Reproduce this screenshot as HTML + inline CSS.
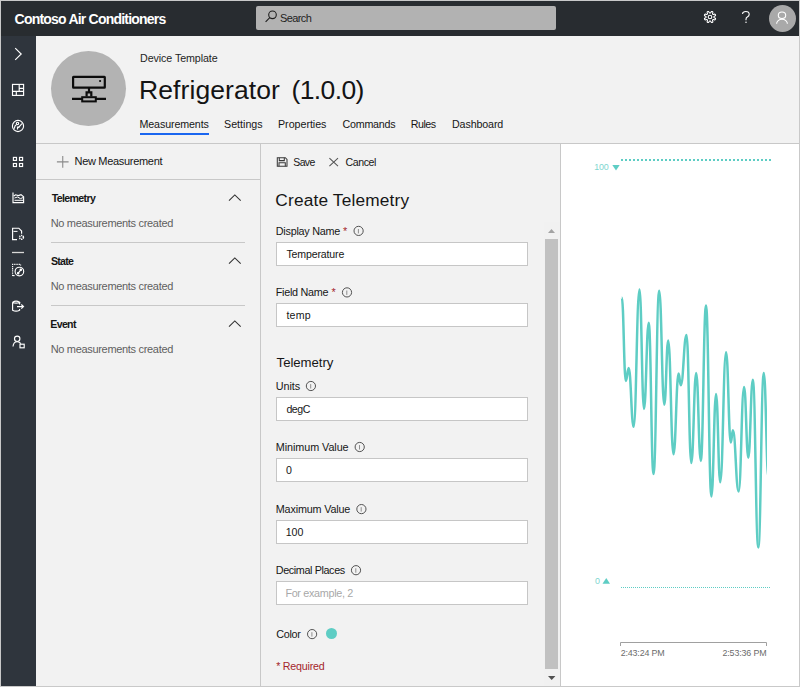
<!DOCTYPE html>
<html><head><meta charset="utf-8">
<style>
*{box-sizing:border-box;margin:0;padding:0}
html,body{width:800px;height:687px;overflow:hidden}
body{position:relative;background:#f2f2f2;font-family:"Liberation Sans",sans-serif;color:#1a1a1a}
.a{position:absolute}
#frame{position:absolute;left:0;top:0;width:800px;height:687px;border:1px solid #c9c9c9}
.hl{position:absolute;height:1px;background:#c8c8c8}
.vl{position:absolute;width:1px;background:#c8c8c8}
.inp{position:absolute;left:276px;width:252px;height:24px;background:#fff;border:1px solid #c6c6c6}
svg.full{position:absolute;left:0;top:0}
</style></head><body>
<div class="a" style="left:1px;top:1px;width:798px;height:35px;background:#282c30"></div>
<div class="a" style="left:1px;top:36px;width:35px;height:650px;background:#2f353d"></div>
<div class="a" style="left:256px;top:6px;width:300px;height:24px;background:#b2b2b2;border-radius:2px"></div>
<div class="a" style="left:769px;top:5px;width:27px;height:27px;border-radius:50%;background:#a9a9a9"></div>

<div class="a" style="left:51px;top:51px;width:75px;height:75px;border-radius:50%;background:#b3b3b3"></div>
<div class="a" style="left:140px;top:133px;width:69px;height:2px;background:#1a66f0"></div>
<div class="hl" style="left:36px;top:143px;width:763px"></div>
<div class="hl" style="left:36px;top:179px;width:224px"></div>
<div class="hl" style="left:51px;top:242px;width:194px"></div>
<div class="hl" style="left:51px;top:305px;width:194px"></div>
<div class="vl" style="left:260px;top:143px;height:543px"></div>

<div class="inp" style="top:242px"></div>
<div class="inp" style="top:303px"></div>
<div class="inp" style="top:397px"></div>
<div class="inp" style="top:458px"></div>
<div class="inp" style="top:520px"></div>
<div class="inp" style="top:581px"></div>
<div class="a" style="left:325.5px;top:628px;width:11px;height:11px;border-radius:50%;background:#5ecdc4"></div>

<div class="a" style="left:544px;top:222px;width:16px;height:464px;background:#f1f1f1"></div>
<div class="a" style="left:545px;top:239px;width:13px;height:430px;background:#c1c1c1"></div>
<div class="vl" style="left:560px;top:143px;height:543px"></div>
<div class="a" style="left:561px;top:144px;width:238px;height:542px;background:#fff"></div>

<svg class="full" width="800" height="687" viewBox="0 0 800 687" font-family="Liberation Sans">
<!-- top bar icons -->
<g fill="none" stroke="#1e1e1e" stroke-width="1.1"><circle cx="272.5" cy="14.8" r="3.8"/><path d="M269.8 17.6 L265.6 21.8"/></g>
<g fill="none" stroke="#fff" stroke-width="1.1" stroke-linejoin="round">
<circle cx="710" cy="17" r="1.8"/>
<path d="M713.95 17.00 L713.95 17.16 L713.97 17.31 L714.03 17.48 L714.27 17.68 L714.81 17.96 L715.32 18.28 L715.52 18.56 L715.53 18.80 L715.48 19.02 L715.40 19.24 L715.31 19.45 L715.19 19.64 L715.01 19.80 L714.67 19.86 L714.07 19.72 L713.50 19.54 L713.19 19.52 L713.03 19.58 L712.90 19.69 L712.79 19.79 L712.69 19.90 L712.58 20.03 L712.52 20.19 L712.54 20.50 L712.72 21.07 L712.86 21.67 L712.80 22.01 L712.64 22.19 L712.45 22.31 L712.24 22.40 L712.02 22.48 L711.80 22.53 L711.56 22.52 L711.28 22.32 L710.96 21.81 L710.68 21.27 L710.48 21.03 L710.31 20.97 L710.16 20.95 L710.00 20.95 L709.84 20.95 L709.69 20.97 L709.52 21.03 L709.32 21.27 L709.04 21.81 L708.72 22.32 L708.44 22.52 L708.20 22.53 L707.98 22.48 L707.76 22.40 L707.55 22.31 L707.36 22.19 L707.20 22.01 L707.14 21.67 L707.28 21.07 L707.46 20.50 L707.48 20.19 L707.42 20.03 L707.31 19.90 L707.21 19.79 L707.10 19.69 L706.97 19.58 L706.81 19.52 L706.50 19.54 L705.93 19.72 L705.33 19.86 L704.99 19.80 L704.81 19.64 L704.69 19.45 L704.60 19.24 L704.52 19.02 L704.47 18.80 L704.48 18.56 L704.68 18.28 L705.19 17.96 L705.73 17.68 L705.97 17.48 L706.03 17.31 L706.05 17.16 L706.05 17.00 L706.05 16.84 L706.03 16.69 L705.97 16.52 L705.73 16.32 L705.19 16.04 L704.68 15.72 L704.48 15.44 L704.47 15.20 L704.52 14.98 L704.60 14.76 L704.69 14.55 L704.81 14.36 L704.99 14.20 L705.33 14.14 L705.93 14.28 L706.50 14.46 L706.81 14.48 L706.97 14.42 L707.10 14.31 L707.21 14.21 L707.31 14.10 L707.42 13.97 L707.48 13.81 L707.46 13.50 L707.28 12.93 L707.14 12.33 L707.20 11.99 L707.36 11.81 L707.55 11.69 L707.76 11.60 L707.98 11.52 L708.20 11.47 L708.44 11.48 L708.72 11.68 L709.04 12.19 L709.32 12.73 L709.52 12.97 L709.69 13.03 L709.84 13.05 L710.00 13.05 L710.16 13.05 L710.31 13.03 L710.48 12.97 L710.68 12.73 L710.96 12.19 L711.28 11.68 L711.56 11.48 L711.80 11.47 L712.02 11.52 L712.24 11.60 L712.45 11.69 L712.64 11.81 L712.80 11.99 L712.86 12.33 L712.72 12.93 L712.54 13.50 L712.52 13.81 L712.58 13.97 L712.69 14.10 L712.79 14.21 L712.90 14.31 L713.03 14.42 L713.19 14.48 L713.50 14.46 L714.07 14.28 L714.67 14.14 L715.01 14.20 L715.19 14.36 L715.31 14.55 L715.40 14.76 L715.48 14.98 L715.53 15.20 L715.52 15.44 L715.32 15.72 L714.81 16.04 L714.27 16.32 L714.03 16.52 L713.97 16.69 L713.95 16.84 Z"/>
<ellipse cx="782" cy="15.3" rx="3.7" ry="3.3"/><path d="M776.6 23.8 A5.4 4.6 0 0 1 787.4 23.8"/>
</g>
<path d="M742.4 13.9 Q742.9 11.5 745.8 11.5 Q749.2 11.5 749.2 14.3 Q749.2 16.1 747.3 17.1 Q746 17.8 746 19.3 V20.3" fill="none" stroke="#fff" stroke-width="1.1"/><circle cx="746" cy="22.2" r="0.75" fill="#fff"/>
<!-- sidebar icons -->
<g fill="none" stroke="#fff" stroke-width="1.15">
<path d="M15.2 48.2 L21.2 54 L15.2 59.8"/>
<rect x="12.5" y="84.4" width="11.1" height="11"/><path d="M12.5 91.4 H23.6 M19.2 84.4 V91.4 M19.2 88.3 H23.6 M16.3 91.4 V95.4"/>
<circle cx="18" cy="126" r="5.6"/><circle cx="17.5" cy="123.4" r="1.2"/><path d="M14.3 128.8 Q14.5 125.5 16.5 124.5"/><path d="M18.2 127.8 L22 123.6"/><path d="M17.5 129.5 V127 H19.5"/>
<rect x="13.4" y="157.4" width="3.1" height="3"/><rect x="19.5" y="157.4" width="3.1" height="3"/><rect x="13.4" y="163.5" width="3.1" height="3"/><rect x="19.5" y="163.5" width="3.1" height="3"/>
<path d="M13 192.4 V202.6 H23.6 V196.8 L21 194.6 L18.4 195.6 L15.5 194.8 L14 196"/><path d="M14.5 198 L17.5 197 L20.5 198.6 L23 197.6 M14.5 200.3 L23 200.3" stroke-width="1"/>
<path d="M17 239.6 H12.6 V228.2 H18.8 L21.6 231 V233.8"/><path d="M13.5 231.4 H17.5" stroke-width="1"/><circle cx="21.5" cy="237.3" r="1.9" stroke-width="1.5" stroke-dasharray="1.2 0.7"/>
<path d="M12 252.5 H24" stroke="#d8d8d8" stroke-width="1.3"/>
<path d="M12.6 276 V264.4 H20.6 V265.6" stroke-dasharray="1.3 0.9"/><path d="M12.6 275.6 H14.6"/><circle cx="19.4" cy="271.5" r="4.3"/><path d="M17.6 273.6 L21.4 269.4"/><circle cx="18.2" cy="273.2" r="0.7" fill="#fff"/><circle cx="20.8" cy="269.8" r="0.7" fill="#fff"/>
<path d="M12.6 302.2 V310.2 Q16 312.2 19.6 310.2 V309 M12.6 302.2 Q16 300.2 19.6 302.2 Q16 304.2 12.6 302.2 M19.6 302.2 V304.5"/><path d="M17 306.6 H23.3 M21.3 304.5 L23.5 306.6 L21.3 308.7"/>
<circle cx="17.2" cy="338.8" r="2.7"/><path d="M13 346.5 Q13.5 341.7 17.2 341.7 Q19.6 341.7 20.8 343.6"/><rect x="20" y="344.2" width="4.2" height="3.6"/>
</g>
<!-- device icon -->
<g fill="none" stroke="#0c0c0c" stroke-width="2.2">
<rect x="73.1" y="76.9" width="31.7" height="10.7" rx="0.4"/>
<path d="M89 87.6 V92.4 M86.6 96.5 V92.4 H91.3 V96.5 M72 98.9 H82.2 M95.8 98.9 H106"/>
<rect x="82.2" y="97.2" width="13.6" height="4.2" stroke-width="2"/>
</g>
<circle cx="100.1" cy="81" r="1.1" fill="#0c0c0c"/>
<!-- left panel icons -->
<path d="M62.75 156 V167.7 M56.9 161.9 H68.6" stroke="#8a8a8a" stroke-width="1.1" fill="none"/>
<g fill="none" stroke="#333" stroke-width="1.1">
<path d="M229 200.6 L234.8 194.9 L240.7 200.6"/>
<path d="M229 263.6 L234.8 257.9 L240.7 263.6"/>
<path d="M229 326.6 L234.8 320.9 L240.7 326.6"/>
</g>
<!-- save / cancel -->
<g fill="none" stroke="#3a3a3a" stroke-width="1.05">
<path d="M277.3 157.7 H285.3 L287 159.4 V166.3 H277.3 Z"/><path d="M279.3 157.7 V160.6 H284.3 V157.7"/><path d="M279 166.3 V162.8 H285.3 V166.3"/>
<path d="M329.4 158.2 L338 166.1 M338 158.2 L329.4 166.1" stroke="#555"/>
</g>
<!-- info icons -->
<g fill="none" stroke="#4a4a4a" stroke-width="0.95">
<circle cx="358.6" cy="230.9" r="4.6"/><path d="M358.4 229 V233.4" stroke="#888"/>
<circle cx="347" cy="292.4" r="4.6"/><path d="M346.8 290.5 V294.9" stroke="#888"/>
<circle cx="310.9" cy="386" r="4.6"/><path d="M310.7 384.1 V388.5" stroke="#888"/>
<circle cx="359.7" cy="447" r="4.6"/><path d="M359.5 445.1 V449.5" stroke="#888"/>
<circle cx="361.4" cy="509.1" r="4.6"/><path d="M361.2 507.2 V511.6" stroke="#888"/>
<circle cx="356" cy="570.2" r="4.6"/><path d="M355.8 568.3 V572.7" stroke="#888"/>
<circle cx="312.1" cy="634.1" r="4.6"/><path d="M311.9 632.2 V636.6" stroke="#888"/>
</g>
<!-- scrollbar arrows -->
<path d="M548 233 H555 L551.5 229 Z" fill="#a3a3a3"/>
<path d="M548 676 H555.4 L551.7 680 Z" fill="#505050"/>
<!-- chart -->
<line x1="621" y1="160" x2="771" y2="160" stroke="#5ecdc4" stroke-width="2" stroke-dasharray="2 2"/>
<line x1="621" y1="587.5" x2="771" y2="587.5" stroke="#5ecdc4" stroke-width="1" stroke-dasharray="1 1"/>
<path d="M612.3 165 H619.7 L616 170.6 Z" fill="#5ecdc4"/>
<path d="M602.5 583.7 H610 L606.25 578 Z" fill="#5ecdc4"/>
<clipPath id="cc"><rect x="600" y="150" width="167" height="450"/></clipPath><path d="M621.8 297.6 C623.6 297.6 624.0 381.0 625.8 381.0 C627.1 381.0 627.4 368.0 628.7 368.0 C630.9 368.0 631.4 426.8 633.6 426.8 C636.3 426.8 636.8 289.5 639.5 289.5 C641.5 289.5 642.0 409.0 644.0 409.0 C646.1 409.0 646.6 322.7 648.7 322.7 C650.9 322.7 651.3 474.0 653.5 474.0 C656.1 474.0 656.6 290.7 659.2 290.7 C661.5 290.7 662.0 404.8 664.3 404.8 C666.1 404.8 666.4 340.4 668.2 340.4 C670.6 340.4 671.1 454.3 673.5 454.3 C675.8 454.3 676.3 373.6 678.6 373.6 C679.6 373.6 679.8 385.2 680.8 385.2 C683.4 385.2 683.9 334.9 686.5 334.9 C688.7 334.9 689.1 463.0 691.3 463.0 C693.5 463.0 694.0 373.1 696.2 373.1 C698.3 373.1 698.7 460.9 700.8 460.9 C703.1 460.9 703.7 305.4 706.0 305.4 C708.4 305.4 709.0 496.5 711.4 496.5 C713.5 496.5 714.0 394.1 716.1 394.1 C717.9 394.1 718.4 482.3 720.2 482.3 C722.9 482.3 723.4 352.3 726.1 352.3 C728.2 352.3 728.7 442.5 730.8 442.5 C731.7 442.5 732.0 430.3 732.9 430.3 C735.5 430.3 736.0 491.5 738.6 491.5 C741.1 491.5 741.6 387.0 744.1 387.0 C746.0 387.0 746.4 457.8 748.3 457.8 C750.3 457.8 750.8 379.8 752.8 379.8 C755.3 379.8 755.8 547.5 758.3 547.5 C760.8 547.5 761.3 373.1 763.8 373.1 C765.9 373.1 766.4 478.0 768.5 478.0" clip-path="url(#cc)" fill="none" stroke="#5ecdc4" stroke-width="2.5" stroke-linejoin="round" stroke-linecap="butt"/>
<path d="M620.5 646 V642.5 H766.5 V646" fill="none" stroke="#a0a0a0" stroke-width="1"/>
<text x='14.60' y='24.30' font-size='14' font-weight="700" letter-spacing='-0.791' fill='#ffffff' xml:space='preserve'>Contoso Air Conditioners</text>
<text x='280.00' y='21.90' font-size='11' letter-spacing='-0.600' fill='#1e1e1e' xml:space='preserve'>Search</text>
<text x='140.00' y='62.20' font-size='10.7' letter-spacing='-0.079' fill='#1e1e1e' xml:space='preserve'>Device Template</text>
<text x='139.00' y='98.75' font-size='26.5' letter-spacing='0.091' fill='#141414' xml:space='preserve'>Refrigerator</text>
<text x='291.50' y='98.75' font-size='26.5' letter-spacing='-0.617' fill='#141414' xml:space='preserve'>(1.0.0)</text>
<text x='139.50' y='128.00' font-size='10.7' letter-spacing='-0.118' fill='#161616' xml:space='preserve'>Measurements</text>
<text x='224.00' y='128.00' font-size='10.7' letter-spacing='0.000' fill='#161616' xml:space='preserve'>Settings</text>
<text x='278.00' y='128.00' font-size='10.7' letter-spacing='-0.028' fill='#161616' xml:space='preserve'>Properties</text>
<text x='342.50' y='128.00' font-size='10.7' letter-spacing='-0.214' fill='#161616' xml:space='preserve'>Commands</text>
<text x='410.75' y='128.00' font-size='10.7' letter-spacing='-0.500' fill='#161616' xml:space='preserve'>Rules</text>
<text x='452.00' y='128.00' font-size='10.7' letter-spacing='-0.125' fill='#161616' xml:space='preserve'>Dashboard</text>
<text x='74.50' y='165.00' font-size='11' letter-spacing='-0.307' fill='#161616' xml:space='preserve'>New Measurement</text>
<text x='51.70' y='202.20' font-size='10.6' font-weight="700" letter-spacing='-0.638' fill='#161616' xml:space='preserve'>Telemetry</text>
<text x='50.70' y='227.00' font-size='11' letter-spacing='-0.318' fill='#5f5f5f' xml:space='preserve'>No measurements created</text>
<text x='50.90' y='264.85' font-size='10.6' font-weight="700" letter-spacing='-0.700' fill='#161616' xml:space='preserve'>State</text>
<text x='50.70' y='289.80' font-size='11' letter-spacing='-0.318' fill='#5f5f5f' xml:space='preserve'>No measurements created</text>
<text x='50.25' y='327.85' font-size='10.6' font-weight="700" letter-spacing='-0.662' fill='#161616' xml:space='preserve'>Event</text>
<text x='50.70' y='352.80' font-size='11' letter-spacing='-0.318' fill='#5f5f5f' xml:space='preserve'>No measurements created</text>
<text x='293.30' y='166.10' font-size='10.5' letter-spacing='-0.667' fill='#161616' xml:space='preserve'>Save</text>
<text x='345.60' y='166.10' font-size='10.6' letter-spacing='-0.440' fill='#161616' xml:space='preserve'>Cancel</text>
<text x='275.30' y='206.00' font-size='17.3' letter-spacing='0.173' fill='#161616' xml:space='preserve'>Create Telemetry</text>
<text x='275.75' y='235.10' font-size='10.8' letter-spacing='-0.236' fill='#161616' xml:space='preserve'>Display Name</text>
<text x='343.00' y='235.10' font-size='10.8' letter-spacing='0.000' fill='#a4262c' xml:space='preserve'>*</text>
<text x='286.40' y='257.60' font-size='10.6' letter-spacing='-0.150' fill='#161616' xml:space='preserve'>Temperature</text>
<text x='275.75' y='295.90' font-size='10.8' letter-spacing='-0.278' fill='#161616' xml:space='preserve'>Field Name</text>
<text x='331.40' y='295.90' font-size='10.8' letter-spacing='0.000' fill='#a4262c' xml:space='preserve'>*</text>
<text x='286.40' y='318.60' font-size='10.6' letter-spacing='0.233' fill='#161616' xml:space='preserve'>temp</text>
<text x='276.60' y='367.10' font-size='13.2' letter-spacing='-0.044' fill='#161616' xml:space='preserve'>Telemetry</text>
<text x='275.75' y='389.75' font-size='10.8' letter-spacing='-0.062' fill='#161616' xml:space='preserve'>Units</text>
<text x='286.40' y='412.50' font-size='10.6' letter-spacing='-0.433' fill='#161616' xml:space='preserve'>degC</text>
<text x='275.75' y='450.75' font-size='10.8' letter-spacing='-0.062' fill='#161616' xml:space='preserve'>Minimum Value</text>
<text x='286.00' y='473.75' font-size='10.6' letter-spacing='0.000' fill='#161616' xml:space='preserve'>0</text>
<text x='275.75' y='512.75' font-size='10.8' letter-spacing='-0.167' fill='#161616' xml:space='preserve'>Maximum Value</text>
<text x='285.75' y='535.50' font-size='10.6' letter-spacing='-0.050' fill='#161616' xml:space='preserve'>100</text>
<text x='275.75' y='573.75' font-size='10.8' letter-spacing='-0.385' fill='#161616' xml:space='preserve'>Decimal Places</text>
<text x='285.40' y='596.90' font-size='10.8' letter-spacing='-0.315' fill='#a8a8a8' xml:space='preserve'>For example, 2</text>
<text x='276.20' y='638.00' font-size='10.8' letter-spacing='-0.300' fill='#161616' xml:space='preserve'>Color</text>
<text x='276.20' y='669.80' font-size='10.7' letter-spacing='-0.222' fill='#a4262c' xml:space='preserve'>* Required</text>
<text x='620.75' y='655.75' font-size='8.9' letter-spacing='-0.167' fill='#6b6b6b' xml:space='preserve'>2:43:24 PM</text>
<text x='722.50' y='655.75' font-size='8.9' letter-spacing='-0.139' fill='#6b6b6b' xml:space='preserve'>2:53:36 PM</text>
<text x='594.25' y='170.20' font-size='8.9' letter-spacing='-0.125' fill='#7fd6cf' xml:space='preserve'>100</text>
<text x='595.00' y='583.50' font-size='8.9' letter-spacing='0.000' fill='#7fd6cf' xml:space='preserve'>0</text>
</svg>
<div id="frame"></div>
</body></html>
